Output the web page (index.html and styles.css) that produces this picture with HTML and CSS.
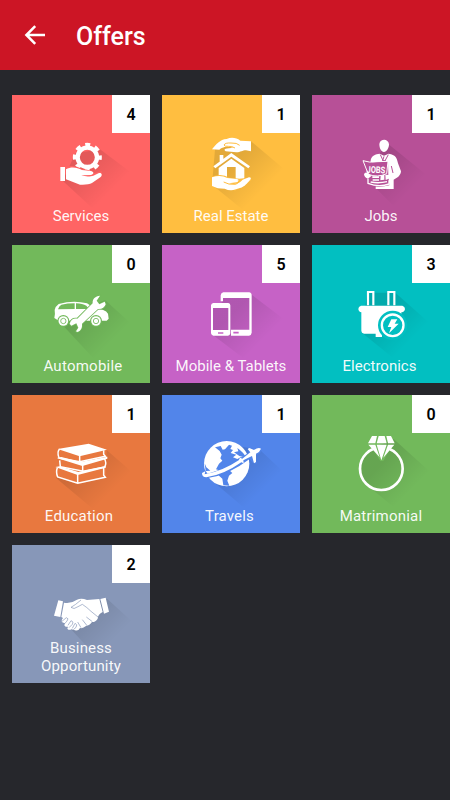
FILE: index.html
```html
<!DOCTYPE html>
<html lang="en">
<head>
<meta charset="utf-8">
<meta name="viewport" content="width=device-width, initial-scale=1">
<title>Offers</title>
<link rel="stylesheet" href="styles.css">
</head>
<body>
<header class="app-bar">
  <svg class="back" viewBox="0 0 24 24"><path d="M22 12H4M12.2 3.2L3.4 12l8.8 8.8"/></svg>
  <h1 class="title">Offers</h1>
</header>
<main class="grid">
  <a class="tile services">
    <svg class="art" viewBox="6 15 414 414">
      <defs><linearGradient id="fade" gradientUnits="userSpaceOnUse" x1="215" y1="225" x2="300" y2="310"><stop offset="0" stop-color="#000" stop-opacity=".11"/><stop offset="1" stop-color="#000" stop-opacity="0"/></linearGradient></defs>
      <path class="shadow" d="M196 190L270 178L400 275L275 380L158 272z"/>
      <circle cx="232" cy="202" r="29" fill="none" stroke="#fff" stroke-width="13"/>
      <circle cx="232" cy="202" r="38" fill="none" stroke="#fff" stroke-width="11" stroke-dasharray="15 14.845" stroke-dashoffset="7.5"/>
      <path class="cut" d="M165 232Q190 223 216 236L246 242L240 252L276 244L272 262L220 286z"/>
      <path class="w" d="M151 231h14v42h-14zM168 238C184 229 202 233 216 240L243 243C254 246 251 254 242 255L214 256C229 261 242 259 250 257L267 249C276 247 278 256 271 262L246 279Q235 285 210 284L168 268z"/>
    </svg>
    <span class="badge">4</span><span class="label">Services</span>
  </a>
  <a class="tile estate">
    <svg class="art" viewBox="6 15 414 414">
      <path class="shadow" d="M165 178L273 154L405 265L280 385L156 284z"/>
      <path class="w" d="M156 178C168 164 180 148 200 147C214 141 229 143 241 152L273 154V184L258 181C247 181 242 187 229 187L197 184C188 177 198 174 222 174C197 166 186 172 178 179z"/><path class="line" d="M239 166Q231 158 213 159Q195 158 192 165Q193 170 205 169Q216 168 225 174" stroke-width="3"/>
      <path class="w" d="M179 195h11v13l-11 11zM160 229L214 189L270 229L265 235L214 200L166 235zM176 234L214 206L253 234V266H227V231H201V266H176z"/>
      <path class="cut" d="M154 260Q185 248 208 263L239 267L273 262V272L225 302z"/>
      <path class="w" d="M156 262C172 256 188 256 202 264L230 267C239 269 240 275 229 277L207 280C225 285 239 280 248 269L267 262Q276 263 270 270C262 279 255 290 240 294L220 300Q206 302 194 296L173 295L156 288z"/>
      <path class="line" d="M191 276Q205 285 227 283Q240 278 235 271" stroke-width="3"/>
    </svg>
    <span class="badge">1</span><span class="label">Real Estate</span>
  </a>
  <a class="tile jobs">
    <svg class="art" viewBox="12 15 414 414">
      <path class="shadow" d="M238 160L405 295L305 395L203 294L200 210z"/>
      <path class="w" d="M214 162C217 145 241 145 243 163C243 174 236 186 228 186S214 175 214 162zM215 191L228 197L242 191C263 195 266 202 270 220L279 244C278 258 266 265 257 269V297H203V287L188 251V211C190 197 203 192 215 191z"/>
      <path class="line" d="M217 194L228 218L241 194M228 199L224 212L233 212M250 228L255 249" stroke-width="3"/>
      <path class="cut" d="M163 211Q180 218 205 216L240 213L241 256L244 286Q214 295 177 285L180 260z"/>
      <path class="white-line" d="M165 212Q182 219 210 215L240 214L236 251Q208 264 181 253z" stroke-width="3"/>
      <path class="w" d="M168 253Q171 244 181 250L190 258L180 266Q169 263 168 253zM193 259h20v5h-20zM194 268h19v4h-19zM218 257L229 254V269L217 271zM232 254L244 255L246 265L233 270z"/>
      <path class="white-line" d="M180 266L180 280Q213 293 243 282V271M188 276Q212 281 237 275" stroke-width="4"/>
      <text class="paper" x="176" y="249" textLength="56" lengthAdjust="spacingAndGlyphs" transform="rotate(2 204 238)">JOBS</text>
    </svg>
    <span class="badge">1</span><span class="label">Jobs</span>
  </a>
  <a class="tile auto">
    <svg class="art" viewBox="6 15 414 414">
      <path class="shadow" d="M181 224L285 180L390 275L275 382L150 247z"/>
      <path class="w" d="M134 210Q137 198 146 192Q190 180 231 190L253 205Q286 208 294 221L296 236L290 242H146L133 234Q136 222 134 210z"/>
      <path class="cut" d="M144 208Q147 197 154 194Q172 190 194 190V207zM198 190Q218 191 229 197L237 207H198z"/>
      <circle class="cut" cx="160" cy="243" r="18"/><circle class="w" cx="160" cy="243" r="14.5"/><circle class="line" cx="160" cy="243" r="8" stroke-width="2.5"/><circle class="cut" cx="258" cy="243" r="18"/><circle class="w" cx="258" cy="243" r="14.5"/><circle class="line" cx="258" cy="243" r="8" stroke-width="2.5"/>
      <path class="w outlined" d="M270 167L260 182L268 193L284 185L287 193Q282 208 264 207L216 251C217 263 214 271 202 276L198 274L205 263L199 250L184 257L179 251C182 239 191 234 202 236L248 190C247 176 256 169 270 167z"/>
    </svg>
    <span class="badge">0</span><span class="label">Automobile</span>
  </a>
  <a class="tile mobile">
    <svg class="art" viewBox="6 15 414 414">
      <path class="shadow" d="M185 165L273 163L405 263L290 385L158 284V200H185z"/>
      <path class="w" fill-rule="evenodd" d="M190 157H267Q275 158 275 166V278Q274 286 267 287H213V269H268V174H189V184H182V166Q183 158 190 157z"/>
      <path class="w" fill-rule="evenodd" d="M160 189H205Q211 190 211 196V280Q210 287 204 287H160Q154 286 153 280V196Q154 190 160 189zM159 204V270H205V204z"/>
      <path class="line" d="M174 279h16M220 278h16" stroke-width="5"/>
    </svg>
    <span class="badge">5</span><span class="label">Mobile &amp; Tablets</span>
  </a>
  <a class="tile electronics">
    <svg class="art" viewBox="12 15 414 414">
      <path class="shadow" d="M178 158H262L405 285L300 390L160 277z"/>
      <path class="white-line" d="M180 196V156H196V196M241 196V156H259V196" stroke-width="6.5"/>
      <path class="w" d="M159 197H283Q291 199 291 207Q290 216 281 217H280V275Q278 281 271 281H222V291H203V281H168Q160 280 160 273V217Q152 216 151 207Q151 199 159 197z"/>
      <circle class="cut" cx="254" cy="256" r="44"/>
      <circle class="white-line" cx="254" cy="256" r="32.5" stroke-width="7"/>
      <path class="w" d="M250 238H268L260 251H272L243 280L250 261H239z"/>
    </svg>
    <span class="badge">3</span><span class="label">Electronics</span>
  </a>
  <a class="tile education">
    <svg class="art" viewBox="6 15 414 414">
      <path class="shadow" d="M145 180L287 178L400 275L285 387L139 265z"/>
      <path class="cut" d="M145 178L237 162L290 179L288 262L203 283L137 260z"/>
      <path class="w" d="M143 177L236 161L291 179L209 199zM140 204L154 201L212 216L292 200V206L217 228zM136 231L149 229L205 246L287 228V233L203 255z"/>
      <path class="white-line" d="M149 177Q140 185 147 204L209 215L286 199L281 193V181M209 197V214M283 205Q291 219 284 231L220 244L151 230L149 211M218 223V242M142 233Q137 246 143 261L203 280L286 262L281 256V234M203 251V280" stroke-width="4.5"/>
    </svg>
    <span class="badge">1</span><span class="label">Education</span>
  </a>
  <a class="tile travels">
    <svg class="art" viewBox="6 15 414 414">
      <path class="shadow" d="M245 170L300 180L405 278L290 385L154 270z"/>
      <circle class="w" cx="200" cy="221" r="68"/>
      <path class="cut" d="M165 172L182 168L188 179L195 178L207 164L216 167L211 177L219 180L212 189L229 194L219 202L232 207L243 201L247 205L241 219L215 229L182 242L168 238L177 221L187 212L181 205L185 194L179 183zM232 174Q252 188 258 203L238 198L222 187L235 184zM176 247L207 240L217 249L207 257L202 272L208 287L190 286L187 266L177 257zM134 220L139 232L151 242L137 243z"/>
      <path class="cut" d="M126 243L135 241L143 251Q192 239 240 205L266 188L264 172L277 177L303 174L301 188L285 198L290 221L278 218L269 207Q203 257 143 264L129 259z"/>
      <path class="w" d="M126 249L136 244L134 253Q187 244 236 211L240 203L247 206L271 187L263 177L268 174L282 180Q295 171 303 176Q300 185 288 191L288 216L282 220L276 198L250 211L251 220L244 217Q190 255 139 262Q126 262 126 249z"/>
    </svg>
    <span class="badge">1</span><span class="label">Travels</span>
  </a>
  <a class="tile matrimonial">
    <svg class="art" viewBox="12 15 414 414">
      <path class="shadow" d="M187 178L257 147L410 285L305 390L170 280Q138 230 187 178z"/>
      <circle class="white-line" cx="220" cy="236" r="64" stroke-width="8"/>
      <path class="cut" d="M187 166L253 166L226 213L217 213z"/>
      <path class="w" d="M192 138H207L202 160H180zM212 138H230L236 160H206zM235 138H249L260 160H240zM181 164H202L215 202zM206 164H236L220 211zM240 164H259L226 203z"/>
    </svg>
    <span class="badge">0</span><span class="label">Matrimonial</span>
  </a>
  <a class="tile business">
    <svg class="art" viewBox="6 15 414 414">
      <path class="shadow" d="M197 203L292 177L400 275L290 385L158 240z"/>
      <path class="w" d="M145 181L159 184L151 231L132 227zM162 188Q182 192 201 179Q214 173 231 180L268 177L278 216Q264 223 263 236Q256 247 246 246Q239 257 228 258Q219 266 210 264Q205 274 195 271L184 268Q177 272 172 266L174 260Q165 262 163 256L165 249Q157 250 155 244Q155 238 159 234L154 231zM271 177L287 173L297 215L282 221z"/>
      <path class="line" d="M213 180L197 193L183 202Q191 210 204 200L217 193Q231 202 243 214L264 231M229 231L247 245M217 239L231 257M203 246L213 263M156 244L169 233Q178 235 171 243L164 251M174 256L183 242Q193 245 187 253L177 263M187 265L195 250Q204 253 198 262L190 269" stroke-width="2"/>
    </svg>
    <span class="badge">2</span><span class="label">Business<br>Opportunity</span>
  </a>
</main>
</body>
</html>
```
FILE: styles.css
```css
* { box-sizing: border-box; }
body {
  margin: 0;
  min-height: 100vh;
  background: #26272c;
  font-family: Roboto, sans-serif;
  overflow: hidden;
}
.app-bar {
  display: flex;
  align-items: center;
  gap: 29px;
  height: 70px;
  padding: 0 0 0 23px;
  background: #cc1525;
  color: #fff;
}
.back {
  width: 24px;
  height: 24px;
  fill: none;
  stroke: #fff;
  stroke-width: 2.5;
}
.title {
  margin: 0;
  padding-top: 3px;
  font-size: 25px;
  font-weight: 500;
  line-height: 30px;
}
.grid {
  display: grid;
  grid-template-columns: repeat(3, 138px);
  grid-auto-rows: 138px;
  gap: 12px;
  padding: 25px 0 0 12px;
}
.tile {
  display: grid;
  grid-template: 138px / 138px;
  background: var(--tile);
}
.tile > * { grid-area: 1 / 1; }
.services { --tile: #ff6464; }
.estate { --tile: #ffbe40; }
.jobs { --tile: #b75097; }
.auto { --tile: #72b95b; }
.mobile { --tile: #c662c6; }
.electronics { --tile: #02bfc1; }
.education { --tile: #e8783f; }
.travels { --tile: #5285ea; }
.matrimonial { --tile: #72b95b; }
.business { --tile: #8797b8; }
.art { width: 138px; height: 138px; }
.shadow { fill: url(#fade); }
.w { fill: #fff; }
.cut { fill: var(--tile); }
.line { fill: none; stroke: var(--tile); }
.white-line { fill: none; stroke: #fff; }
.outlined { stroke: var(--tile); stroke-width: 5; paint-order: stroke; }
.paper { fill: #fff; font: bold 28px Roboto, sans-serif; }
.badge {
  justify-self: end;
  width: 38px;
  height: 38px;
  background: #fff;
  color: #000;
  font-size: 16px;
  font-weight: 600;
  line-height: 39px;
  text-align: center;
}
.label {
  align-self: end;
  padding-bottom: 8px;
  color: rgba(255, 255, 255, .95);
  font-size: 15px;
  line-height: 17.5px;
  text-align: center;
}
.auto .label { padding-left: 4px; letter-spacing: .25px; }
.education .label { padding-right: 4px; letter-spacing: .2px; }
.travels .label { padding-right: 3px; letter-spacing: .15px; }
.electronics .label { padding-right: 3px; }
.matrimonial .label { letter-spacing: .2px; }
.business .label { letter-spacing: .15px; }
```
